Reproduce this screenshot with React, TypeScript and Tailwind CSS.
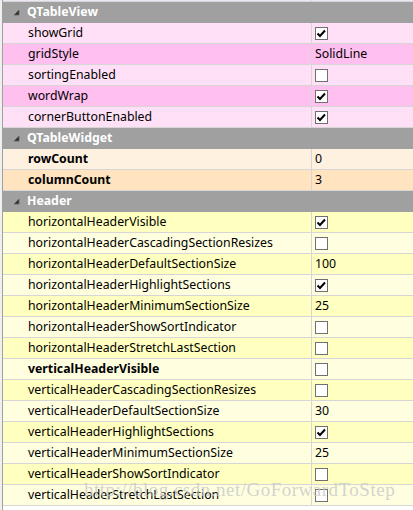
import React from 'react';

type Row = { name: string; value?: string; check?: boolean; bold?: boolean };
type Group = { title: string; light: string; dark: string; startDark?: boolean; rows: Row[] };

const groups: Group[] = [
  {
    title: 'QTableView',
    light: 'bg-[#ffe0f6]',
    dark: 'bg-[#ffbfef]',
    rows: [
      { name: 'showGrid', check: true },
      { name: 'gridStyle', value: 'SolidLine' },
      { name: 'sortingEnabled', check: false },
      { name: 'wordWrap', check: true },
      { name: 'cornerButtonEnabled', check: true },
    ],
  },
  {
    title: 'QTableWidget',
    light: 'bg-[#fff1e0]',
    dark: 'bg-[#ffe4bf]',
    rows: [
      { name: 'rowCount', value: '0', bold: true },
      { name: 'columnCount', value: '3', bold: true },
    ],
  },
  {
    title: 'Header',
    light: 'bg-[#ffffe0]',
    dark: 'bg-[#ffffbf]',
    startDark: true,
    rows: [
      { name: 'horizontalHeaderVisible', check: true },
      { name: 'horizontalHeaderCascadingSectionResizes', check: false },
      { name: 'horizontalHeaderDefaultSectionSize', value: '100' },
      { name: 'horizontalHeaderHighlightSections', check: true },
      { name: 'horizontalHeaderMinimumSectionSize', value: '25' },
      { name: 'horizontalHeaderShowSortIndicator', check: false },
      { name: 'horizontalHeaderStretchLastSection', check: false },
      { name: 'verticalHeaderVisible', check: false, bold: true },
      { name: 'verticalHeaderCascadingSectionResizes', check: false },
      { name: 'verticalHeaderDefaultSectionSize', value: '30' },
      { name: 'verticalHeaderHighlightSections', check: true },
      { name: 'verticalHeaderMinimumSectionSize', value: '25' },
      { name: 'verticalHeaderShowSortIndicator', check: false },
      { name: 'verticalHeaderStretchLastSection', check: false },
    ],
  },
];

const CheckBox: React.FC<{ checked: boolean }> = ({ checked }) => (
  <div className="w-[13px] h-[13px] border border-[#707070] bg-white flex items-center justify-center">
    {checked && (
      <svg width="9" height="9" viewBox="0 0 9 9">
        <path d="M0.5 4.5 L3 7 L8 1.5" fill="none" stroke="#000" strokeWidth="2" />
      </svg>
    )}
  </div>
);

const GroupHeader: React.FC<{ title: string }> = ({ title }) => (
  <div className="flex h-[21px] bg-[#a0a0a0] border-b border-[#a0a0a0]">
    <div className="w-[24px] flex items-center justify-center pl-[2px]">
      <svg width="7" height="7" viewBox="0 0 7 7">
        <path d="M6 1 L6 6 L1 6 Z" fill="#303030" stroke="#606060" strokeWidth="0.8" />
      </svg>
    </div>
    <span className="text-white font-bold leading-[20px]">{title}</span>
  </div>
);

const PropRow: React.FC<{ row: Row; bg: string }> = ({ row, bg }) => (
  <div className={`flex h-[21px] border-b border-[#d6d6d6] ${bg}`}>
    <div className={`w-[309px] shrink-0 pl-[25px] border-r border-[#d6d6d6] leading-[20px] text-black ${row.bold ? 'font-bold' : ''}`}>
      {row.name}
    </div>
    <div className="pl-[3px] flex items-center text-black leading-[20px]">
      {row.check !== undefined ? <CheckBox checked={row.check} /> : row.value}
    </div>
  </div>
);

export default function App() {
  return (
    <div
      className="relative w-[413px] h-[510px] overflow-hidden bg-[#f0f0f0] text-[12.3px]"
      style={{ fontFamily: '"Noto Sans", "Liberation Sans", sans-serif' }}
    >
      <div className="ml-[2px] border-l border-[#a0a0a0] h-full bg-white">
        <div className="flex h-[2px] bg-[#eee6f2] border-b border-[#d6d6d6]">
          <div className="w-[309px] border-r border-[#d6d6d6]" />
        </div>
        {groups.map((g) => (
          <div key={g.title}>
            <GroupHeader title={g.title} />
            {g.rows.map((r, i) => (
              <PropRow
                key={r.name}
                row={r}
                bg={(i % 2 === 0) === !!g.startDark ? g.dark : g.light}
              />
            ))}
          </div>
        ))}
      </div>
      <div
        className="absolute left-[84px] top-[476px] text-[19px] text-[#c8c8c8]/80 tracking-[0.5px] pointer-events-none"
        style={{ fontFamily: '"Liberation Serif", serif' }}
      >
        http://blog.csdn.net/GoForwardToStep
      </div>
    </div>
  );
}
